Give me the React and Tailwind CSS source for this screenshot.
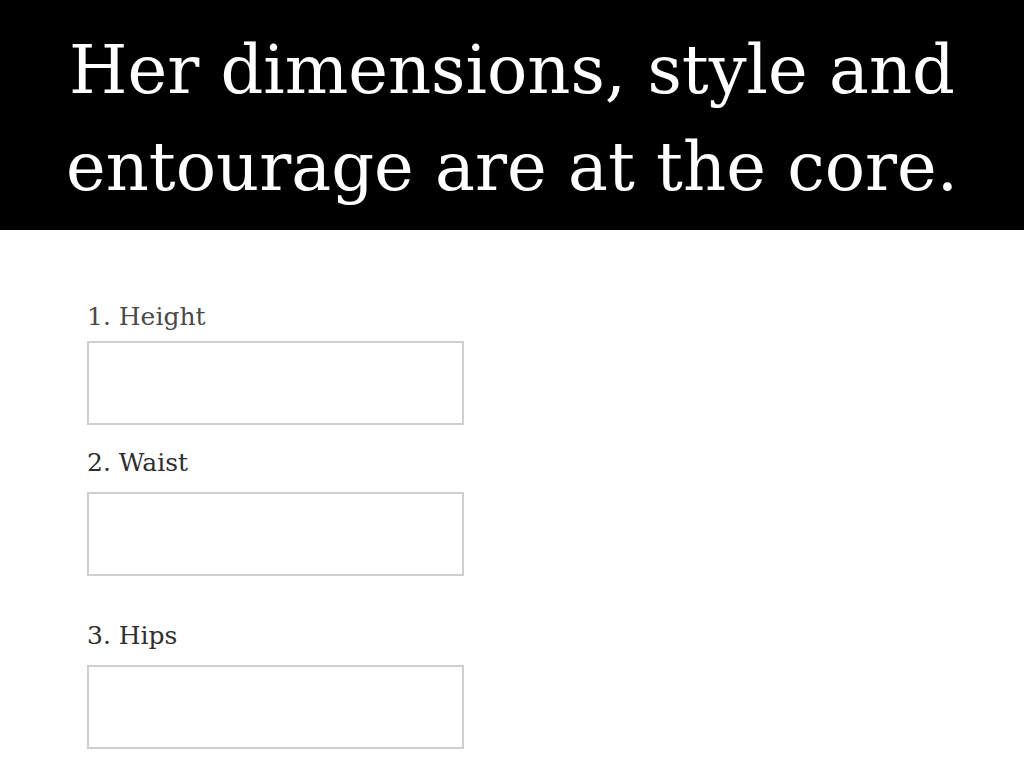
const fields = [
  { label: '1. Height', labelClass: 'mt-[70px] text-[#4a4a4a]', boxClass: 'mt-[8px]' },
  { label: '2. Waist', labelClass: 'mt-[21px] text-[#2e2e2e]', boxClass: 'mt-[13px]' },
  { label: '3. Hips', labelClass: 'mt-[43px] text-[#2e2e2e]', boxClass: 'mt-[13px]' },
];

export default function App() {
  return (
    <div className="w-[1024px] h-[768px] bg-white overflow-hidden font-['DejaVu_Serif',serif]">
      {/* Title band */}
      <div className="h-[230px] bg-black pt-[22px] text-center text-white text-[67px] leading-[97px]">
        <div>Her dimensions, style and</div>
        <div>entourage are at the core.</div>
      </div>

      {/* Form */}
      <div className="flex flex-col pl-[87px]">
        {fields.map(f => (
          <div key={f.label} className="flex flex-col">
            <div className={`text-[25px] leading-[33px] ${f.labelClass}`}>{f.label}</div>
            <div className={`w-[377px] h-[84px] border-2 border-[#cfcfcf] bg-white ${f.boxClass}`} />
          </div>
        ))}
      </div>
    </div>
  );
}
